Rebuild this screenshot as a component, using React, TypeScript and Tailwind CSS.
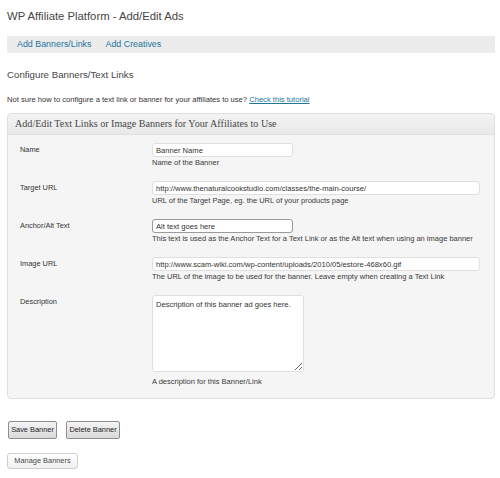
import React from "react";

type FieldRow = {
  label: string;
  value: string;
  help: string;
  kind: "short" | "long" | "area";
  focused?: boolean;
};

const rows: FieldRow[] = [
  { label: "Name", value: "Banner Name", help: "Name of the Banner", kind: "short" },
  {
    label: "Target URL",
    value: "http://www.thenaturalcookstudio.com/classes/the-main-course/",
    help: "URL of the Target Page, eg. the URL of your products page",
    kind: "long",
  },
  {
    label: "Anchor/Alt Text",
    value: "Alt text goes here",
    help: "This text is used as the Anchor Text for a Text Link or as the Alt text when using an image banner",
    kind: "short",
    focused: true,
  },
  {
    label: "Image URL",
    value: "http://www.scam-wiki.com/wp-content/uploads/2010/05/estore-468x60.gif",
    help: "The URL of the image to be used for the banner. Leave empty when creating a Text Link",
    kind: "long",
  },
  {
    label: "Description",
    value: "Description of this banner ad goes here.",
    help: "A description for this Banner/Link",
    kind: "area",
  },
];

const inputClassName =
  "block h-[14px] rounded-[3px] border bg-white px-[3px] text-[7.6px] text-[#333] outline-none font-['Liberation_Sans',Arial,sans-serif]";

const buttonClassName =
  "h-[18px] rounded-[2px] border border-[#8d8d8d] bg-gradient-to-b from-[#f4f4f4] to-[#d9d9d9] text-[7.4px] leading-none text-[#222]";

const FormRow = ({ row, last }: { row: FieldRow; last: boolean }) => (
  <div className={`flex ${last ? "" : "mb-[13px]"}`}>
    <div className="w-[132px] shrink-0 pt-[2px] text-[7.4px] leading-[10px] text-[#333]">{row.label}</div>
    <div className="flex flex-col">
      {row.kind === "area" ? (
        <textarea
          defaultValue={row.value}
          className="block h-[77px] w-[152px] rounded-[3px] border border-[#dfdfdf] bg-white px-[3px] pt-[4px] text-[7.6px] leading-[10px] text-[#333] outline-none font-['Liberation_Sans',Arial,sans-serif]"
        />
      ) : (
        <input
          type="text"
          defaultValue={row.value}
          className={`${inputClassName} ${row.kind === "long" ? "w-[328px]" : "w-[141px]"} ${
            row.focused ? "border-[#9a9a9a]" : "border-[#dfdfdf]"
          }`}
        />
      )}
      <div
        className={`${row.kind === "area" ? "mt-[5px]" : "mt-[1px]"} text-[7.5px] leading-[10px] whitespace-nowrap text-[#3a3a3a]`}
      >
        {row.help}
      </div>
    </div>
  </div>
);

export default function App() {
  return (
    <div className="h-[478px] w-[500px] overflow-hidden bg-white pl-[7px] font-['Liberation_Sans',Arial,sans-serif]">
      <h1 className="pt-[7px] text-[11.3px] leading-[18px] text-[#464646]">WP Affiliate Platform - Add/Edit Ads</h1>

      <div className="mt-[11px] flex h-[17px] w-[488px] items-center gap-[14px] bg-[#ececec] pl-[10px] text-[8.9px] text-[#21759b]">
        <a href="#">Add Banners/Links</a>
        <a href="#">Add Creatives</a>
      </div>

      <h2 className="mt-[13px] text-[9.7px] leading-[18px] text-[#464646]">Configure Banners/Text Links</h2>

      <p className="mt-[11px] text-[7.6px] leading-[10px] text-[#333]">
        Not sure how to configure a text link or banner for your affiliates to use?{" "}
        <a href="#" className="text-[#21759b] underline">
          Check this tutorial
        </a>
      </p>

      <div className="mt-[8px] w-[488px] rounded-[4px] border border-[#dfdfdf] bg-[#f5f5f5]">
        <div className="flex h-[21px] items-center rounded-t-[4px] border-b border-[#dfdfdf] bg-gradient-to-b from-[#f3f3f3] to-[#e9e9e9] pl-[7px] font-['Liberation_Serif',Georgia,serif] text-[10.1px] text-[#464646]">
          Add/Edit Text Links or Image Banners for Your Affiliates to Use
        </div>
        <div className="pb-[11px] pl-[12px] pt-[8px]">
          {rows.map((row, i) => (
            <FormRow key={row.label} row={row} last={i === rows.length - 1} />
          ))}
        </div>
      </div>

      <div className="ml-[1px] mt-[22px] flex gap-[9px]">
        <button className={`${buttonClassName} w-[49px]`}>Save Banner</button>
        <button className={`${buttonClassName} w-[54px]`}>Delete Banner</button>
      </div>

      <button className="mt-[14px] block h-[16px] w-[71px] rounded-[3px] border border-[#cfcfcf] bg-gradient-to-b from-[#ffffff] to-[#f0f0f0] text-[7.4px] leading-none text-[#464646]">
        Manage Banners
      </button>
    </div>
  );
}
